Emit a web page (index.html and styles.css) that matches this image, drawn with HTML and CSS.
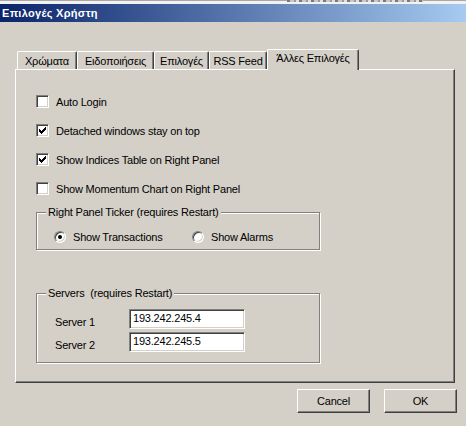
FILE: index.html
```html
<!DOCTYPE html>
<html>
<head>
<meta charset="utf-8">
<link rel="stylesheet" href="styles.css">
</head>
<body>
<div class="topstrip"><span class="noise"></span></div>
<div class="titlebar">Επιλογές Χρήστη</div>
<div class="dialog">
  <div class="tabs">
    <div class="tab t1">Χρώματα</div>
    <div class="tab t2">Ειδοποιήσεις</div>
    <div class="tab t3">Επιλογές</div>
    <div class="tab t4">RSS Feed</div>
    <div class="tab active t5">Άλλες Επιλογές</div>
  </div>
  <div class="panel">
    <div class="check first"><span class="box"></span><span>Auto Login</span></div>
    <div class="check"><span class="box"><svg width="9" height="9" viewBox="0 0 9 9" shape-rendering="crispEdges"><rect x="1" y="3" width="1" height="3"/><rect x="2" y="4" width="1" height="3"/><rect x="3" y="5" width="1" height="3"/><rect x="4" y="4" width="1" height="3"/><rect x="5" y="3" width="1" height="3"/><rect x="6" y="2" width="1" height="3"/><rect x="7" y="1" width="1" height="3"/></svg></span><span>Detached windows stay on top</span></div>
    <div class="check"><span class="box"><svg width="9" height="9" viewBox="0 0 9 9" shape-rendering="crispEdges"><rect x="1" y="3" width="1" height="3"/><rect x="2" y="4" width="1" height="3"/><rect x="3" y="5" width="1" height="3"/><rect x="4" y="4" width="1" height="3"/><rect x="5" y="3" width="1" height="3"/><rect x="6" y="2" width="1" height="3"/><rect x="7" y="1" width="1" height="3"/></svg></span><span>Show Indices Table on Right Panel</span></div>
    <div class="check"><span class="box"></span><span>Show Momentum Chart on Right Panel</span></div>

    <div class="group g1">
      <span class="legend">Right Panel Ticker (requires Restart)</span>
      <div class="radios">
        <div class="radio-item first-radio"><span class="radio on"><span class="dot"></span></span><span>Show Transactions</span></div>
        <div class="radio-item"><span class="radio"></span><span>Show Alarms</span></div>
      </div>
    </div>

    <div class="group g2">
      <span class="legend">Servers&nbsp; (requires Restart)</span>
      <div class="server-row"><span class="srv-label">Server 1</span><span class="field">193.242.245.4</span></div>
      <div class="server-row second"><span class="srv-label">Server 2</span><span class="field">193.242.245.5</span></div>
    </div>
  </div>
  <div class="buttons">
    <div class="btn">Cancel</div>
    <div class="btn">OK</div>
  </div>
</div>
</body>
</html>
```
FILE: styles.css
```css
html, body {
  margin: 0;
  padding: 0;
}
body {
  width: 466px;
  height: 426px;
  overflow: hidden;
  background: #d4d0c8;
  font-family: "Liberation Sans", Arial, sans-serif;
  font-size: 11px;
  letter-spacing: -0.2px;
  color: #000;
}
.topstrip {
  height: 4px;
  background: linear-gradient(#a8a8a8 0, #a8a8a8 1px, #f2f2f2 1px, #f2f2f2 100%);
  display: flex;
}
.noise {
  display: block;
  margin-left: 287px;
  width: 136px;
  height: 2px;
  background: repeating-linear-gradient(90deg, #7a7a7a 0, #7a7a7a 3px, #c8c8c8 3px, #c8c8c8 7px, #9a9a9a 7px, #9a9a9a 9px, #e0e0e0 9px, #e0e0e0 12px);
}
.titlebar {
  height: 18px;
  line-height: 18px;
  padding-left: 2px;
  background: linear-gradient(90deg, #0a246a 0%, #a6caf0 100%);
  color: #fff;
  font-weight: bold;
  font-size: 11px;
  letter-spacing: 0.3px;
}
.dialog {
  padding: 27px 0 0 15px;
}
.tabs {
  display: flex;
  align-items: flex-end;
  height: 20px;
  padding-left: 2px;
}
.tab {
  box-sizing: border-box;
  height: 18px;
  line-height: 17px;
  padding-top: 1px;
  text-align: center;
  border-top: 1px solid #fff;
  border-left: 1px solid #fff;
  border-right: 1px solid #404040;
  box-shadow: inset -1px 0 0 #808080;
  border-radius: 2px 2px 0 0;
  white-space: nowrap;
}
.t1 { width: 60px; }
.t2 { width: 77px; }
.t3 { width: 55px; }
.t4 { width: 58px; }
.t5 { width: 92px; }
.tab.active {
  height: 21px;
  margin-bottom: -1px;
  line-height: 17px;
  padding-top: 0;
  position: relative;
  z-index: 1;
  background: #d4d0c8;
}
.panel {
  box-sizing: border-box;
  width: 440px;
  height: 314px;
  border-top: 1px solid #fff;
  border-left: 1px solid #fff;
  border-right: 1px solid #404040;
  border-bottom: 1px solid #404040;
  box-shadow: inset -1px -1px 0 #808080;
  padding: 0 0 0 20px;
}
.check {
  display: flex;
  align-items: center;
  height: 13px;
  margin-top: 16px;
  white-space: nowrap;
}
.check.first {
  margin-top: 25px;
}
.box {
  box-sizing: border-box;
  width: 13px;
  height: 13px;
  margin-right: 7px;
  background: #fff;
  border: 1px solid;
  border-color: #808080 #fff #fff #808080;
  box-shadow: inset 1px 1px 0 #404040, inset -1px -1px 0 #d4d0c8;
  flex: none;
  display: flex;
  align-items: center;
  justify-content: center;
}
.box svg {
  display: block;
  fill: #000;
}
.group {
  position: relative;
  box-sizing: border-box;
  width: 284px;
  border: 1px solid #808080;
  box-shadow: inset 1px 1px 0 #fff, 1px 1px 0 #fff;
}
.g1 {
  margin-top: 17px;
  height: 38px;
  padding: 17px 0 0 17px;
}
.g2 {
  margin-top: 43px;
  height: 70px;
  padding: 15px 0 0 18px;
}
.legend {
  position: absolute;
  left: 9px;
  top: -8px;
  padding: 0 2px;
  background: #d4d0c8;
  line-height: 14px;
  white-space: nowrap;
}
.radios {
  display: flex;
  align-items: center;
  height: 13px;
}
.radio-item {
  display: flex;
  align-items: center;
  white-space: nowrap;
}
.first-radio {
  width: 138px;
}
.radio {
  box-sizing: border-box;
  width: 12px;
  height: 12px;
  margin-right: 7px;
  border-radius: 50%;
  background: #fff;
  border: 1px solid;
  border-color: #808080 #fff #fff #808080;
  box-shadow: inset 1px 1px 0 #404040, inset -1px -1px 0 #d4d0c8;
  display: flex;
  align-items: center;
  justify-content: center;
  flex: none;
}
.dot {
  width: 4px;
  height: 4px;
  border-radius: 50%;
  background: #000;
}
.server-row {
  display: flex;
  align-items: flex-start;
}
.server-row.second {
  margin-top: 3px;
}
.srv-label {
  width: 74px;
  padding-top: 7px;
  line-height: 13px;
}
.field {
  box-sizing: border-box;
  width: 116px;
  height: 20px;
  line-height: 16px;
  padding-left: 3px;
  background: #fff;
  border: 1px solid;
  border-color: #808080 #fff #fff #808080;
  box-shadow: inset 1px 1px 0 #404040, inset -1px -1px 0 #d4d0c8;
  font-size: 11px;
}
.buttons {
  display: flex;
  justify-content: flex-end;
  gap: 14px;
  margin-top: 6px;
  padding-right: 9px;
}
.btn {
  box-sizing: border-box;
  width: 73px;
  height: 24px;
  line-height: 22px;
  text-align: center;
  border: 1px solid;
  border-color: #fff #404040 #404040 #fff;
  box-shadow: inset -1px -1px 0 #808080;
}
```
